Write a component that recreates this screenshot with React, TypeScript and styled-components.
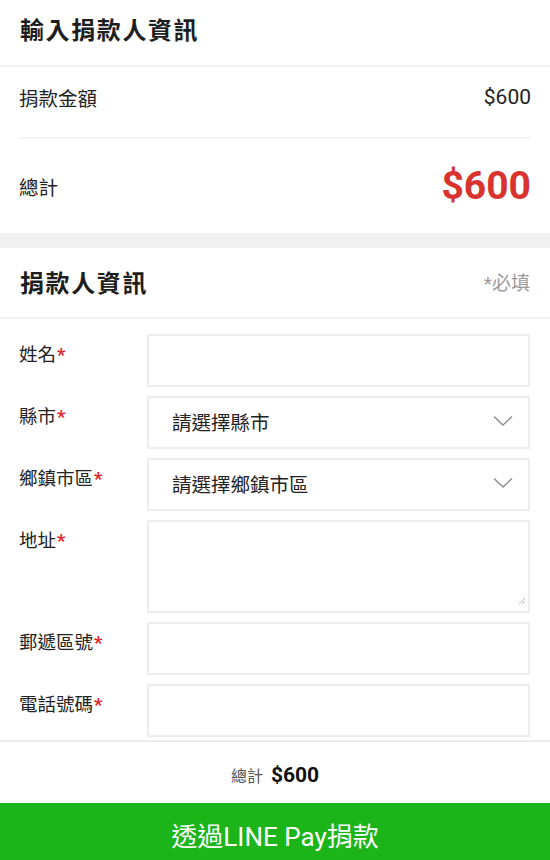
import styled, { createGlobalStyle } from "styled-components";

const GlobalStyle = createGlobalStyle`
  html, body {
    margin: 0;
    padding: 0;
    background: #fff;
  }
  body {
    font-family: Roboto, "Noto Sans CJK TC", "Noto Sans", sans-serif;
    color: #222;
  }
  * {
    box-sizing: border-box;
  }
`;

const Page = styled.div`
  display: flex;
  flex-direction: column;
  width: 550px;
  height: 860px;
  overflow: hidden;
`;

const Scroll = styled.main`
  flex: 1;
  overflow: hidden;
`;

const Card = styled.section`
  background: #fff;
`;

const Band = styled.div`
  height: 15px;
  background: #f1f1f1;
`;

const CardHeader = styled.header<{ $height: number; $lift: number }>`
  display: flex;
  align-items: center;
  justify-content: space-between;
  height: ${(p) => p.$height}px;
  padding: 0 20px ${(p) => p.$lift}px;
  border-bottom: 2px solid #f2f2f2;
`;

const Title = styled.h2`
  margin: 0;
  font-size: 24px;
  font-weight: 700;
  letter-spacing: 1.6px;
  color: #1e1e1e;
`;

const Required = styled.span`
  font-size: 19px;
  color: #9a9a9a;
`;

const SummaryList = styled.div`
  padding: 0 19px;
`;

const SummaryRow = styled.div<{ $height: number; $divider?: boolean; $lift: number }>`
  display: flex;
  align-items: center;
  justify-content: space-between;
  height: ${(p) => p.$height}px;
  padding-bottom: ${(p) => p.$lift}px;
  border-bottom: ${(p) => (p.$divider ? "2px solid #f4f4f4" : "none")};
`;

const SummaryLabel = styled.span`
  font-size: 19.5px;
  color: #222;
`;

const Amount = styled.span<{ $big?: boolean }>`
  font-family: Roboto, sans-serif;
  font-size: ${(p) => (p.$big ? "39px" : "21px")};
  font-weight: ${(p) => (p.$big ? 700 : 400)};
  color: ${(p) => (p.$big ? "#d93330" : "#222")};
`;

const Form = styled.div`
  display: flex;
  flex-direction: column;
  gap: 9px;
  padding: 15px 20px 0 19px;
`;

const Field = styled.div`
  display: grid;
  grid-template-columns: 128px 1fr;
  align-items: start;
`;

const Label = styled.label`
  padding-top: 6px;
  font-size: 18.5px;
  color: #222;
`;

const Star = styled.span`
  color: #e0262a;
  font-family: Roboto, sans-serif;
  font-weight: 700;
  margin-left: 1px;
`;

const Box = styled.div<{ $height: number }>`
  position: relative;
  height: ${(p) => p.$height}px;
  border: 2px solid #ededed;
  background: #fff;
`;

const SelectBox = styled(Box)`
  display: flex;
  align-items: center;
  justify-content: space-between;
  padding: 0 15px 3px 23px;
  font-size: 19.5px;
  color: #222;
`;

const Grip = styled.svg`
  position: absolute;
  right: 2px;
  bottom: 6px;
`;

const Footer = styled.footer`
  border-top: 2px solid #ececec;
  background: #fff;
`;

const FooterTotal = styled.div`
  display: flex;
  align-items: baseline;
  justify-content: center;
  gap: 8px;
  height: 61px;
  padding-top: 21px;
`;

const FooterLabel = styled.span`
  font-size: 16px;
  color: #555;
`;

const FooterAmount = styled.span`
  font-family: Roboto, sans-serif;
  font-size: 21px;
  font-weight: 700;
  color: #111;
`;

const PayButton = styled.button`
  display: block;
  width: 100%;
  height: 57px;
  border: none;
  background: #1bb51a;
  color: #fff;
  font-family: Roboto, "Noto Sans CJK TC", sans-serif;
  font-size: 26px;
  padding: 6px 0 0;
`;

const Chevron = () => (
  <svg width="20" height="12" viewBox="0 0 20 12">
    <path d="M1 1.5 L10 10 L19 1.5" fill="none" stroke="#8c8c8c" strokeWidth="1.4" />
  </svg>
);

const fields: { label: string; kind: "input" | "select" | "area"; placeholder?: string }[] = [
  { label: "姓名", kind: "input" },
  { label: "縣市", kind: "select", placeholder: "請選擇縣市" },
  { label: "鄉鎮市區", kind: "select", placeholder: "請選擇鄉鎮市區" },
  { label: "地址", kind: "area" },
  { label: "郵遞區號", kind: "input" },
  { label: "電話號碼", kind: "input" },
];

export default function App() {
  return (
    <>
      <GlobalStyle />
      <Page>
        <Scroll>
          <Card>
            <CardHeader $height={67} $lift={8}>
              <Title>輸入捐款人資訊</Title>
            </CardHeader>
            <SummaryList>
              <SummaryRow $height={72} $lift={10} $divider>
                <SummaryLabel>捐款金額</SummaryLabel>
                <Amount>$600</Amount>
              </SummaryRow>
              <SummaryRow $height={94} $lift={0}>
                <SummaryLabel>總計</SummaryLabel>
                <Amount $big>$600</Amount>
              </SummaryRow>
            </SummaryList>
          </Card>
          <Band />
          <Card>
            <CardHeader $height={71} $lift={3}>
              <Title>捐款人資訊</Title>
              <Required>*必填</Required>
            </CardHeader>
            <Form>
              {fields.map((f) => (
                <Field key={f.label}>
                  <Label>
                    {f.label}
                    <Star>*</Star>
                  </Label>
                  {f.kind === "select" ? (
                    <SelectBox $height={53}>
                      {f.placeholder}
                      <Chevron />
                    </SelectBox>
                  ) : f.kind === "area" ? (
                    <Box $height={93}>
                      <Grip width="8" height="8" viewBox="0 0 8 8">
                        <path d="M7 1 L1 7 M7 4 L4 7" stroke="#b5b5b5" strokeWidth="1" />
                      </Grip>
                    </Box>
                  ) : (
                    <Box $height={53} />
                  )}
                </Field>
              ))}
            </Form>
          </Card>
        </Scroll>
        <Footer>
          <FooterTotal>
            <FooterLabel>總計</FooterLabel>
            <FooterAmount>$600</FooterAmount>
          </FooterTotal>
          <PayButton>透過LINE Pay捐款</PayButton>
        </Footer>
      </Page>
    </>
  );
}
